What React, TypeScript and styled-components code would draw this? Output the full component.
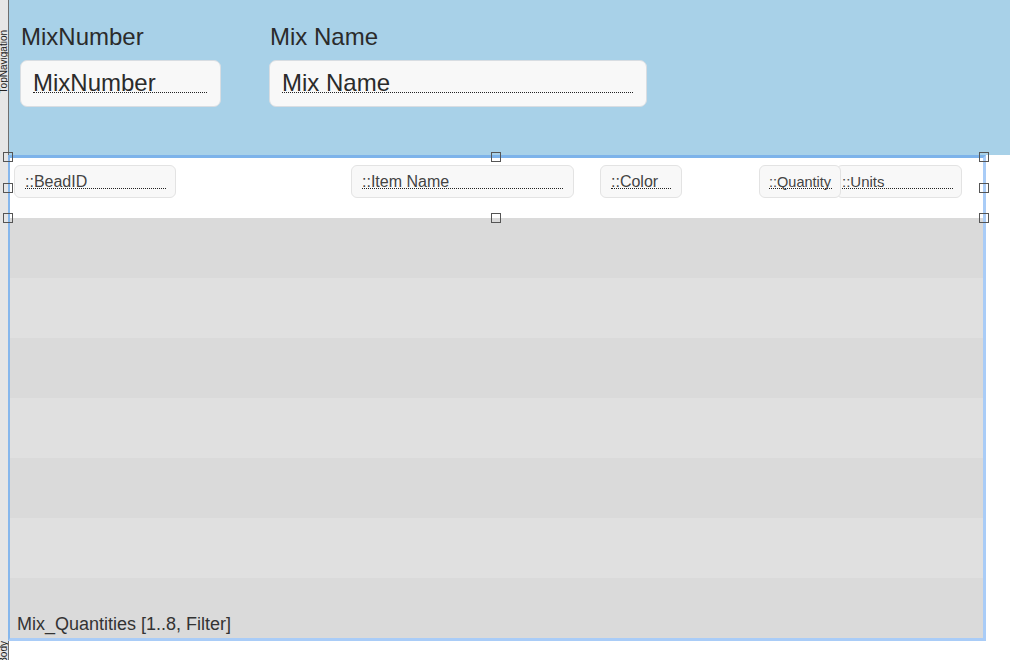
import React from "react";
import styled, { createGlobalStyle } from "styled-components";

const GlobalStyle = createGlobalStyle`
  html, body {
    margin: 0;
    padding: 0;
    background: #ffffff;
    font-family: "Liberation Sans", Arial, sans-serif;
    color: #333333;
    overflow: hidden;
  }
`;

const Root = styled.div`
  display: flex;
  flex-direction: row;
  width: 1010px;
  height: 660px;
  overflow: hidden;
`;

const Gutter = styled.div`
  display: flex;
  flex-direction: column;
  width: 8px;
  flex-shrink: 0;
  background: #e6e6e6;
  border-right: 1px solid #6e6e6e;
  overflow: hidden;
`;

const PartTab = styled.div<{ $h?: number; $top: number }>`
  display: flex;
  justify-content: center;
  align-items: flex-start;
  height: ${({ $h }) => ($h ? `${$h}px` : "auto")};
  flex: ${({ $h }) => ($h ? "0 0 auto" : "1 1 auto")};
  padding-top: ${({ $top }) => $top}px;
  box-sizing: border-box;
`;

const PartName = styled.span`
  writing-mode: vertical-rl;
  transform: rotate(180deg);
  font-size: 10px;
  line-height: 10px;
  color: #222;
  white-space: nowrap;
`;

const Main = styled.div`
  display: flex;
  flex-direction: column;
  flex: 1;
  min-width: 0;
`;

const Header = styled.div`
  display: flex;
  flex-direction: row;
  gap: 48px;
  height: 155px;
  box-sizing: border-box;
  padding: 24px 0 0 11px;
  background: #a8d1e8;
`;

const FieldGroup = styled.div`
  display: flex;
  flex-direction: column;
`;

const FieldLabel = styled.div`
  margin-left: 1px;
  font-size: 24px;
  line-height: 26px;
  color: #2b2b2b;
`;

const InputBox = styled.div<{ $w: number }>`
  width: ${({ $w }) => $w}px;
  height: 47px;
  margin-top: 10px;
  box-sizing: border-box;
  padding: 12px 13px 0 12px;
  background: #f8f8f8;
  border: 1px solid #d8dde2;
  border-radius: 7px;
`;

const InputValue = styled.div`
  font-size: 24px;
  line-height: 19px;
  color: #2b2b2b;
  border-bottom: 1px dotted #222;
  white-space: nowrap;
`;

const Body = styled.div`
  flex: 1;
  background: #ffffff;
`;

const Portal = styled.div`
  display: flex;
  flex-direction: column;
  width: 978px;
  margin-left: -1px;
  box-sizing: border-box;
  border: 3px solid #a9ccf7;
  border-top-color: #7db3ea;
  border-left: 2px solid #86b7ec;
`;

const SelectedRow = styled.div`
  position: relative;
  display: flex;
  flex-direction: row;
  align-items: flex-start;
  height: 60px;
  box-sizing: border-box;
  padding-top: 7px;
  background: #ffffff;
`;

const StripeRow = styled.div<{ $dark: boolean }>`
  display: flex;
  align-items: flex-end;
  height: 60px;
  box-sizing: border-box;
  padding: 0 0 5px 7px;
  background: ${({ $dark }) => ($dark ? "#dadada" : "#e0e0e0")};
`;

const RowField = styled.div<{
  $w: number;
  $ml: number;
  $pl: number;
  $pr: number;
  $fs: number;
  $top?: boolean;
}>`
  position: relative;
  z-index: ${({ $top }) => ($top ? 1 : 0)};
  flex-shrink: 0;
  width: ${({ $w }) => $w}px;
  height: 33px;
  margin-left: ${({ $ml }) => $ml}px;
  box-sizing: border-box;
  padding: 10px ${({ $pr }) => $pr}px 0 ${({ $pl }) => $pl}px;
  background: #f8f8f8;
  border: 1px solid #e3e3e3;
  border-radius: 6px;
  font-size: ${({ $fs }) => $fs}px;
`;

const RowValue = styled.div`
  line-height: 12px;
  color: #444;
  border-bottom: 1px dotted #222;
  white-space: nowrap;
`;

const Handle = styled.div<{ $x: number; $y: number }>`
  position: absolute;
  left: ${({ $x }) => $x}px;
  top: ${({ $y }) => $y}px;
  width: 10px;
  height: 10px;
  box-sizing: border-box;
  border: 1px solid #555;
  z-index: 2;
`;

const PortalTitle = styled.span`
  font-size: 18px;
  line-height: 18px;
  color: #333;
  white-space: nowrap;
`;

const rowFields = [
  { name: "::BeadID", w: 162, ml: 4, pl: 10, pr: 9, fs: 16 },
  { name: "::Item Name", w: 223, ml: 175, pl: 10, pr: 10, fs: 16 },
  { name: "::Color", w: 82, ml: 26, pl: 10, pr: 10, fs: 16 },
  { name: "::Quantity", w: 82, ml: 77, pl: 9, pr: 8, fs: 14.5, top: true },
  { name: "::Units", w: 126, ml: -5, pl: 5, pr: 8, fs: 15 },
];

const handles = [
  [-7, -6],
  [481, -6],
  [969, -6],
  [-7, 25],
  [969, 25],
  [-7, 55],
  [481, 55],
  [969, 55],
];

const App: React.FC = () => {
  const stripes = [true, false, true, false, true, false, true];
  return (
    <Root>
      <GlobalStyle />
      <Gutter>
        <PartTab $h={155} $top={30}>
          <PartName>TopNavigation</PartName>
        </PartTab>
        <PartTab $top={486}>
          <PartName>Body</PartName>
        </PartTab>
      </Gutter>
      <Main>
        <Header>
          <FieldGroup>
            <FieldLabel>MixNumber</FieldLabel>
            <InputBox $w={201}>
              <InputValue>MixNumber</InputValue>
            </InputBox>
          </FieldGroup>
          <FieldGroup>
            <FieldLabel>Mix Name</FieldLabel>
            <InputBox $w={378}>
              <InputValue>Mix Name</InputValue>
            </InputBox>
          </FieldGroup>
        </Header>
        <Body>
          <Portal>
            <SelectedRow>
              {rowFields.map((f) => (
                <RowField
                  key={f.name}
                  $w={f.w}
                  $ml={f.ml}
                  $pl={f.pl}
                  $pr={f.pr}
                  $fs={f.fs}
                  $top={f.top}
                >
                  <RowValue>{f.name}</RowValue>
                </RowField>
              ))}
              {handles.map(([x, y], i) => (
                <Handle key={i} $x={x} $y={y} />
              ))}
            </SelectedRow>
            {stripes.map((dark, i) => (
              <StripeRow key={i} $dark={dark}>
                {i === stripes.length - 1 && (
                  <PortalTitle>Mix_Quantities [1..8, Filter]</PortalTitle>
                )}
              </StripeRow>
            ))}
          </Portal>
        </Body>
      </Main>
    </Root>
  );
};

export default App;
